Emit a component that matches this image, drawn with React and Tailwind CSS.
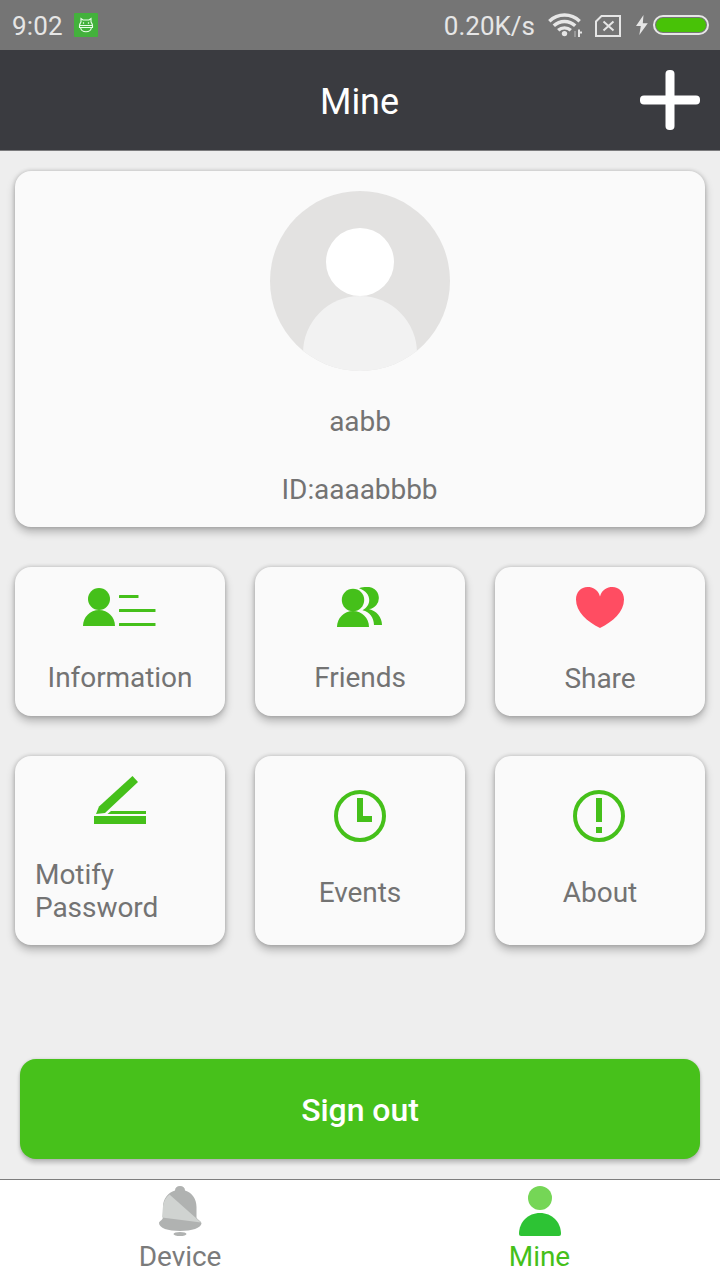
const GREEN = '#45c01a';

function AppBadgeIcon() {
  return (
    <svg className="ml-[11px] -mt-px" width="24" height="24" viewBox="0 0 24 24" fill="none">
      <rect width="24" height="24" rx="1" fill="#43b13c" />
      <path
        d="M7 9V5.500L9 7h6L17 5.500V9C17.500 10 18.500 11 18.500 12.500H5.500C5.500 11 6.500 10 7 9zM5.500 12.500v2h13v-2M6.500 14.500c.6 3 2.700 4.300 5.500 4.300s4.900-1.300 5.500-4.300M9 9.500l1 1M15 9.500l-1 1"
        stroke="#eaffea"
        strokeWidth="1.100"
      />
    </svg>
  );
}

function WifiIcon() {
  return (
    <svg width="34" height="26" viewBox="0 0 34 26" fill="none" stroke="#e6e6e6" strokeWidth="3.400">
      <path d="M1.300 9.200a21.800 21.800 0 0 1 30.400 0" />
      <path d="M5.800 13.800a15.400 15.400 0 0 1 21.400 0" />
      <path d="M10.200 18.300a9.300 9.300 0 0 1 12.600 0" />
      <circle cx="16.500" cy="21.600" r="2.700" fill="#e6e6e6" stroke="none" />
      <path d="M27 19v6" stroke="#999" strokeWidth="2" />
      <path d="M31 17.500v7.500" strokeWidth="2" />
      <path d="M31 20.500h3" strokeWidth="2" />
    </svg>
  );
}

function SimIcon() {
  return (
    <svg className="ml-[13px] mt-px" width="26" height="22" viewBox="0 0 26 22" fill="none" stroke="#e6e6e6" strokeWidth="2">
      <path d="M6.500 1H25v20H1V6.500z" />
      <path d="M8.500 6.500l10 9M18.500 6.500l-10 9" />
    </svg>
  );
}

function StatusBar() {
  return (
    <div className="h-[50px] bg-[#757575] flex items-center pl-3 pr-[11px] text-[26px] leading-[50px] tracking-normal text-[#e6e6e6]">
      <span className="pt-0.5 tracking-[0.2px]">9:02</span>
      <AppBadgeIcon />
      <span className="ml-auto pt-0.5 mr-[13px]">0.20K/s</span>
      <WifiIcon />
      <SimIcon />
      <svg className="ml-[15px]" width="12" height="20" viewBox="0 0 12 20" fill="#e6e6e6">
        <path d="M7.500 0L0 11h4.800L3.300 20 11.800 8.300H6.800z" />
      </svg>
      <div className="ml-[5px] w-14 h-5 rounded-full border-2 border-[#e6e6e6] p-px">
        <div className="h-full rounded-full bg-[#48c207]" />
      </div>
    </div>
  );
}

function Header() {
  return (
    <header className="h-[101px] bg-[#3a3b40] border-b border-[#7b7b7d] grid grid-cols-3 items-center px-5">
      <h1 className="col-start-2 text-center text-[36px] leading-[42px] text-white pt-1 pr-px">Mine</h1>
      <svg className="justify-self-end" width="60" height="60" viewBox="0 0 60 60" fill="#fff">
        <rect x="25.500" width="9" height="60" rx="4" />
        <rect y="25.500" width="60" height="9" rx="4" />
      </svg>
    </header>
  );
}

function Avatar() {
  return (
    <svg width="180" height="180" viewBox="0 0 180 180">
      <defs>
        <clipPath id="avatar">
          <circle cx="90" cy="90" r="90" />
        </clipPath>
      </defs>
      <g clipPath="url(#avatar)">
        <rect width="180" height="180" fill="#e3e2e1" />
        <circle cx="90" cy="162" r="57" fill="#f2f2f2" />
        <circle cx="90" cy="71" r="34" fill="#fff" />
      </g>
    </svg>
  );
}

const TILES = [
  {
    label: 'Information',
    iconClass: 'pt-[21px] pr-px h-[94px]',
    icon: (
      <svg width="74" height="38" viewBox="0 0 74 38" fill={GREEN}>
        <circle cx="16" cy="11" r="11" />
        <path d="M0 38C0 29 7 22 16 22S32 29 32 38z" />
        <rect x="36" y="7" width="19.500" height="3" rx=".5" />
        <rect x="36" y="21" width="36.500" height="3" rx=".5" />
        <rect x="36" y="35" width="36.500" height="3" rx=".5" />
      </svg>
    ),
  },
  {
    label: 'Friends',
    iconClass: 'pt-5 h-[94px]',
    icon: (
      <svg width="46" height="40" viewBox="0 0 46 40" fill={GREEN}>
        <circle cx="16" cy="13" r="11.200" />
        <path d="M0 40C0 31 7 24 16 24S32 31 32 40z" />
        <path d="M22 1.300C25 0 27 0 29.500 0A11 11 0 0 1 32 22C39.500 24 45 30 45 38H37C36.600 30.500 33 25 25.500 23.200C35 18.500 35 5.500 22 1.300z" />
      </svg>
    ),
  },
  {
    label: 'Share',
    iconClass: 'pt-5 h-[95px]',
    icon: (
      <svg width="48" height="41" viewBox="0 0 48 41" fill="#ff4d62">
        <path d="M24 9.500C22 2.500 17 0 11.500 0 5 0 0 5 0 12.500 0 25 11 34.500 24 41 37 34.500 48 25 48 12.500 48 5 43 0 36.500 0 31 0 26 2.500 24 9.500z" />
      </svg>
    ),
  },
  {
    label: 'Motify Password',
    iconClass: 'pt-5 h-[102px]',
    icon: (
      <svg width="52" height="48" viewBox="0 0 52 48" fill={GREEN}>
        <path d="M38.500 0L44 6 11 37 2 38 5 30.500z" />
        <path d="M17 35H52v3H13.500z" />
        <rect y="40" width="52" height="8" />
      </svg>
    ),
  },
  {
    label: 'Events',
    iconClass: 'pt-[34px] h-[120px]',
    icon: (
      <svg width="52" height="52" viewBox="0 0 52 52" fill={GREEN}>
        <circle cx="26" cy="26" r="24" fill="none" stroke={GREEN} strokeWidth="4" />
        <path d="M23 8h6v18h9v6H23z" />
      </svg>
    ),
  },
  {
    label: 'About',
    iconClass: 'pt-[34px] pr-0.5 h-[120px]',
    icon: (
      <svg width="52" height="52" viewBox="0 0 52 52" fill={GREEN}>
        <circle cx="26" cy="26" r="24" fill="none" stroke={GREEN} strokeWidth="4" />
        <rect x="23" y="8" width="6" height="24" />
        <rect x="23" y="37" width="6" height="6" />
      </svg>
    ),
  },
];

function Tile({ label, icon, iconClass }) {
  return (
    <div className="bg-[#fafafa] rounded-2xl shadow-[0_5px_8px_rgba(0,0,0,0.25),0_0_4px_rgba(0,0,0,0.2)] flex flex-col items-center px-5">
      <div className={iconClass}>{icon}</div>
      <span>{label}</span>
    </div>
  );
}

function TabBar() {
  return (
    <nav className="h-[101px] bg-white border-t border-[#7d7d7d] grid grid-cols-2">
      <div className="flex flex-col items-center pt-1.5">
        <svg width="44" height="50" viewBox="0 0 44 50">
          <path d="M17 4.500C17 1.500 19 0 22 0s5 1.500 5 4.500C34 6.500 38.500 13 38.500 21v10.500c1 2.500 5 3.500 5 6C43 42 34 45 22 45S1 42 1 37c0-2 4-3 4-6V21C5 13 10 6.500 17 4.500z" fill="#b0b2b1" />
          <path d="M11.500 8.500L43 36.500 4 31.500 5 20C5.500 15.500 8 11 11.500 8.500z" fill="#d0d3d1" />
          <ellipse cx="22" cy="48" rx="6.500" ry="2" fill="#b0b2b1" />
        </svg>
        <span className="mt-1 text-[#7b7b7b]">Device</span>
      </div>
      <div className="flex flex-col items-center pt-1.5 text-[#45c01a]">
        <svg width="42" height="50" viewBox="0 0 42 50">
          <circle cx="21" cy="12" r="12" fill="#75d656" />
          <path d="M2 50Q0 50 0 48C0 36 9 27 21 27S42 36 42 48Q42 50 40 50z" fill="#2dc334" />
        </svg>
        <span className="mt-1 mr-px">Mine</span>
      </div>
    </nav>
  );
}

export default function App() {
  return (
    <div className="w-[720px] h-[1280px] flex flex-col bg-[#eeeeee] font-[Roboto,sans-serif] text-[28px] leading-[33px] tracking-[-0.06px] text-[#737373]">
      <StatusBar />
      <Header />

      <main className="flex-1 flex flex-col px-[15px] pt-5">
        {/* Profile card */}
        <section className="h-[356px] bg-[#fafafa] rounded-2xl shadow-[0_5px_8px_rgba(0,0,0,0.25),0_0_4px_rgba(0,0,0,0.2)] flex flex-col items-center pt-5">
          <Avatar />
          <p className="mt-[34px]">aabb</p>
          <p className="mt-[35px] mr-px">ID:aaaabbbb</p>
        </section>

        {/* Menu */}
        <section className="mt-10 grid grid-cols-3 grid-rows-[149px_189px] gap-x-[30px] gap-y-10">
          {TILES.map((tile) => (
            <Tile key={tile.label} {...tile} />
          ))}
        </section>

        <button className="mt-auto mb-5 mx-[5px] h-[100px] pt-0.5 rounded-2xl bg-[#47c11b] text-white text-[32px] font-medium shadow-[0_4px_4px_rgba(0,0,0,0.2),0_0_3px_rgba(0,0,0,0.15)]">
          Sign out
        </button>
      </main>

      <TabBar />
    </div>
  );
}
